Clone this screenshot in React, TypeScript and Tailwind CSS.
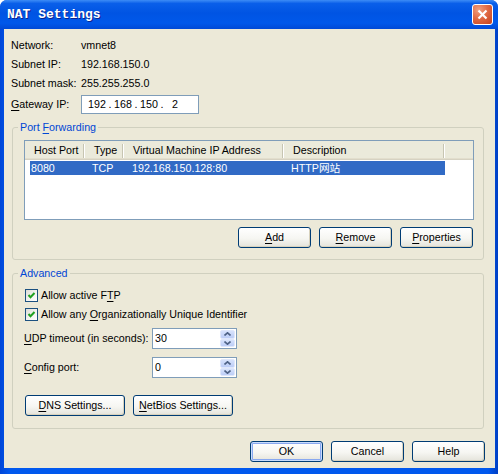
import React from 'react';

const U = ({ children }: { children: React.ReactNode }) => (
  <span className="underline underline-offset-[2px] decoration-[1px]">{children}</span>
);

const Btn = ({
  children,
  className = '',
  isDefault = false,
}: {
  children: React.ReactNode;
  className?: string;
  isDefault?: boolean;
}) => (
  <button
    className={`h-[21px] shrink-0 rounded-[3px] border border-[#003c74] bg-[linear-gradient(to_bottom,#ffffff_0%,#f6f6f2_55%,#e4e3da_100%)] text-[10.7px] leading-none text-black whitespace-nowrap ${
      isDefault
        ? 'shadow-[inset_0_0_0_1px_#c9dcfc,inset_0_0_0_2px_#88a8f0]'
        : 'shadow-[inset_-1px_-1px_0_#d8d2bd]'
    } ${className}`}
  >
    {children}
  </button>
);

const Check = () => (
  <span className="w-[13px] h-[13px] shrink-0 border border-[#1c5180] bg-[linear-gradient(135deg,#dcdcd5_0%,#f2f2ee_50%,#ffffff_100%)] flex items-center justify-center">
    <svg width="9" height="9" viewBox="0 0 9 9">
      <path d="M1.5 4 L3.5 6.2 L7.5 2" stroke="#21a121" strokeWidth="2" fill="none" />
    </svg>
  </span>
);

const SpinBtn = ({ up }: { up: boolean }) => (
  <div className="flex-1 rounded-[2px] border border-[#dfe7fb] bg-[linear-gradient(to_bottom,#d7e2fb,#bccdf7)] flex items-center justify-center">
    <svg width="7" height="4" viewBox="0 0 7 4">
      <path d={up ? 'M0.5 3.5 L3.5 0.8 L6.5 3.5' : 'M0.5 0.5 L3.5 3.2 L6.5 0.5'} stroke="#4d6185" strokeWidth="1.6" fill="none" />
    </svg>
  </div>
);

const Spin = ({ value }: { value: string }) => (
  <div className="w-[85px] h-[21px] shrink-0 border border-[#7f9db9] bg-white flex">
    <div className="flex-1 pl-[2px] leading-[19px]">{value}</div>
    <div className="w-[16px] flex flex-col py-[1px] pr-[1px]">
      <SpinBtn up />
      <SpinBtn up={false} />
    </div>
  </div>
);

const HeadCell = ({ w, children }: { w: string; children?: React.ReactNode }) => (
  <div className={`${w} h-full flex items-center justify-between shrink-0`}>
    <span className="pl-[9px] whitespace-nowrap">{children}</span>
    <span className="w-[2px] h-[14px] border-l border-[#c7c5b2] border-r border-r-white" />
  </div>
);

export default function App() {
  return (
    <div className="w-[498px] h-[474px] bg-white font-['Liberation_Sans','Noto_Sans_CJK_SC',sans-serif] text-[10.7px] text-black">
      <div className="w-full h-full rounded-t-[7px] bg-[linear-gradient(to_right,#0046d8,#0058ee_2%,#0058ee_98%,#003fc4)] flex flex-col overflow-hidden">
        {/* title bar */}
        <div className="h-[29px] shrink-0 flex items-center justify-between pl-[7px] pr-[5px] bg-[linear-gradient(to_bottom,#3d8cf6_0%,#0a5fe9_12%,#0054e3_45%,#0058ea_80%,#0049d6_100%)]">
          <span className="font-['Liberation_Mono',monospace] font-bold text-[13px] text-white [text-shadow:1px_1px_0_#0c238f]">
            NAT Settings
          </span>
          <div className="w-[21px] h-[21px] rounded-[3px] border border-white bg-[radial-gradient(circle_at_30%_25%,#f0a080_0%,#e06b45_45%,#c4401c_100%)] flex items-center justify-center">
            <svg width="11" height="11" viewBox="0 0 11 11">
              <path d="M1.5 1.5 L9.5 9.5 M9.5 1.5 L1.5 9.5" stroke="white" strokeWidth="2.2" />
            </svg>
          </div>
        </div>

        {/* client area */}
        <div className="flex-1 ml-[4px] mr-[3px] mb-[6px] bg-[#ece9d8] flex flex-col">
          <div className="pt-[7px] pl-[7px] flex flex-col">
            <div className="h-[19px] flex items-center">
              <span className="w-[70px]">Network:</span>
              <span>vmnet8</span>
            </div>
            <div className="h-[19px] flex items-center">
              <span className="w-[70px]">Subnet IP:</span>
              <span>192.168.150.0</span>
            </div>
            <div className="h-[19px] flex items-center">
              <span className="w-[70px] whitespace-nowrap">Subnet mask:</span>
              <span>255.255.255.0</span>
            </div>
            <div className="h-[19px] mt-[2px] flex items-center">
              <span className="w-[70px] whitespace-nowrap">
                <U>G</U>ateway IP:
              </span>
              <div className="w-[118px] h-[19px] border border-[#7f9db9] bg-white flex items-center pl-[4px]">
                <span className="w-[22px] text-center">192</span>
                <span className="w-[4px] text-center">.</span>
                <span className="w-[22px] text-center">168</span>
                <span className="w-[4px] text-center">.</span>
                <span className="w-[22px] text-center">150</span>
                <span className="w-[4px] text-center">.</span>
                <span className="w-[22px] text-center">2</span>
              </div>
            </div>
          </div>

          {/* Port Forwarding */}
          <fieldset className="mt-[7px] ml-[8px] mr-[11px] border border-[#d0d0bf] rounded-[3px]">
            <legend className="ml-[5px] px-[2px] leading-[13px] text-[#0046d5]">
              Port <U>F</U>orwarding
            </legend>
            <div className="mt-[6px] ml-[11px] w-[450px] h-[80px] border border-[#7f9db9] bg-white flex flex-col">
              <div className="h-[19px] shrink-0 flex bg-[#ebeadb] shadow-[inset_0_-1px_0_#d6d2c2,inset_0_-2px_0_#e2decd]">
                <HeadCell w="w-[60px]">Host Port</HeadCell>
                <HeadCell w="w-[39px]">Type</HeadCell>
                <HeadCell w="w-[160px]">Virtual Machine IP Address</HeadCell>
                <HeadCell w="w-[161px]">Description</HeadCell>
              </div>
              <div className="mt-[1px] ml-[5px] w-[415px] h-[14px] flex bg-[#316ac5] text-white leading-[14px] whitespace-nowrap">
                <span className="w-[55px] pl-[1px]">8080</span>
                <span className="w-[39px] pl-[7px]">TCP</span>
                <span className="w-[160px] pl-[8px]">192.168.150.128:80</span>
                <span className="w-[161px] pl-[7px]">HTTP网站</span>
              </div>
            </div>
            <div className="mt-[7px] mr-[10px] mb-[11px] flex justify-end gap-[8px]">
              <Btn className="w-[73px]">
                <U>A</U>dd
              </Btn>
              <Btn className="w-[73px]">
                <U>R</U>emove
              </Btn>
              <Btn className="w-[73px]">
                <U>P</U>roperties
              </Btn>
            </div>
          </fieldset>

          {/* Advanced */}
          <fieldset className="mt-[7px] ml-[8px] mr-[11px] border border-[#d0d0bf] rounded-[3px]">
            <legend className="ml-[5px] px-[2px] leading-[13px] text-[#0046d5]">Advanced</legend>
            <div className="mt-[6px] ml-[12px] flex flex-col">
              <div className="h-[19px] flex items-center gap-[3px]">
                <Check />
                <span className="whitespace-nowrap">
                  Allow active F<U>T</U>P
                </span>
              </div>
              <div className="h-[19px] flex items-center gap-[3px]">
                <Check />
                <span className="whitespace-nowrap">
                  Allow any <U>O</U>rganizationally Unique Identifier
                </span>
              </div>
            </div>
            <div className="mt-[4px] ml-[11px] flex items-center">
              <span className="w-[128px] shrink-0 whitespace-nowrap">
                <U>U</U>DP timeout (in seconds):
              </span>
              <Spin value="30" />
            </div>
            <div className="mt-[8px] ml-[11px] flex items-center">
              <span className="w-[128px] shrink-0 whitespace-nowrap">
                <U>C</U>onfig port:
              </span>
              <Spin value="0" />
            </div>
            <div className="mt-[17px] ml-[12px] mb-[12px] flex gap-[8px]">
              <Btn className="w-[100px]">
                <U>D</U>NS Settings...
              </Btn>
              <Btn className="w-[100px]">
                <U>N</U>etBios Settings...
              </Btn>
            </div>
          </fieldset>

          <div className="mt-[12px] mr-[10px] flex justify-end gap-[8px]">
            <Btn className="w-[73px]" isDefault>
              OK
            </Btn>
            <Btn className="w-[73px]">Cancel</Btn>
            <Btn className="w-[73px]">Help</Btn>
          </div>
        </div>
      </div>
    </div>
  );
}
